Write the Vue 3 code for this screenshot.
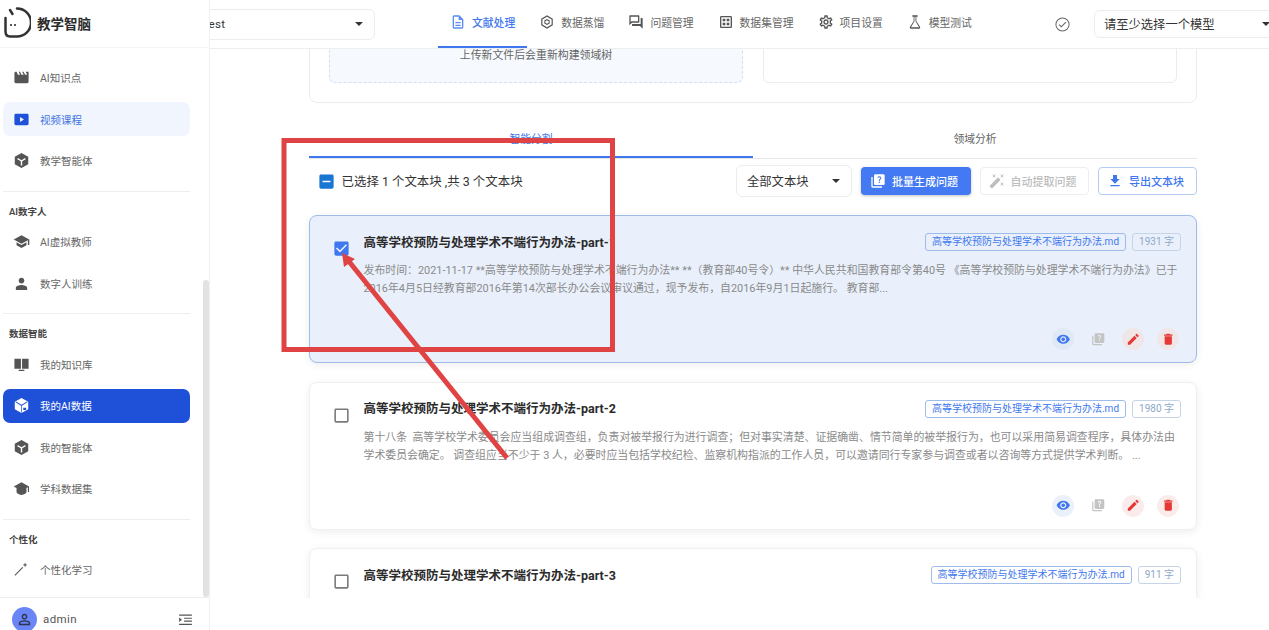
<script setup>
const icons = {
  movie: 'M18 4l2 4h-3l-2-4h-2l2 4h-3l-2-4H8l2 4H7L5 4H4c-1.1 0-1.99.9-1.99 2L2 18c0 1.1.9 2 2 2h16c1.1 0 2-.9 2-2V4h-4z',
  video: 'M20 4H4c-1.1 0-2 .9-2 2v12c0 1.1.9 2 2 2h16c1.1 0 2-.9 2-2V6c0-1.1-.9-2-2-2zM10 15.5v-7l5.5 3.5-5.5 3.5z',
  hex: 'M12 1.5l9.5 5.2v10.6L12 22.5l-9.5-5.2V6.7z M7 8.5l5 3 5-3 1 1.6-5 3V19h-2v-5.9l-5-3z',
  school: 'M5 13.18v4L12 21l7-3.82v-4L12 17l-7-3.82zM12 3L1 9l11 6 9-4.91V17h2V9L12 3z',
  person: 'M12 12c2.21 0 4-1.79 4-4s-1.79-4-4-4-4 1.79-4 4 1.79 4 4 4zm0 2c-2.67 0-8 1.34-8 4v3h16v-3c0-2.66-5.33-4-8-4z',
  book: 'M2 4h9.2v14H2z M12.8 4H22v14h-9.2z M8 19.5h8V21H8z',
  cube: 'M12 1.5l9.5 5.2v10.6L12 22.5l-9.5-5.2V6.7z M12 11.1L4.2 6.4l-.6 1 7.9 4.9V22h1V12.3l7.9-4.9-.6-1z M14.5 15h4v3.5h-4z',
  cap: 'M12 3L1 9l4 2.2V17c0 1.5 3 4 7 4s7-2.500 7-4v-5.800l2-1.100V17h1.600V9z',
  wand: 'M3.200 20.800l-1.100-1.100L13.200 8.600l1.100 1.100z M17 2l.9 2.600 2.600.9-2.600.9L17 9l-.9-2.600-2.600-.9 2.600-.9z',
  doc: 'M8 16h8v2H8zm0-4h8v2H8zm6-10H6c-1.100 0-2 .9-2 2v16c0 1.100.89 2 1.990 2H18c1.100 0 2-.9 2-2V8l-6-6zm4 18H6V4h7v5h5v11z',
  ring: 'M12 2l8.700 5v10L12 22l-8.700-5V7z M12 4.100L5.100 8.100v7.800l6.900 4 6.900-4V8.100z M12 7.500l4 2.300v4.400l-4 2.300-4-2.300V9.800z M12 9.200l-2.500 1.500v2.600l2.500 1.500 2.500-1.500v-2.600z',
  chat: 'M15 4v7H5.170L4 12.170V4h11m1-2H3c-.55 0-1 .45-1 1v14l4-4h10c.55 0 1-.45 1-1V3c0-.55-.45-1-1-1zm5 4h-2v9H6v2c0 .55.45 1 1 1h11l4 4V7c0-.55-.45-1-1-1z',
  grid: 'M19 3H5c-1.100 0-2 .9-2 2v14c0 1.100.9 2 2 2h14c1.100 0 2-.9 2-2V5c0-1.100-.9-2-2-2zm0 16H5V5h14v14zM7 7h4v4H7zm6 0h4v4h-4zm-6 6h4v4H7zm6 0h4v4h-4z',
  gear: 'M19.430 12.980c.04-.32.07-.64.07-.98 0-.34-.03-.66-.07-.98l2.110-1.650c.19-.15.24-.42.12-.64l-2-3.460c-.09-.16-.26-.25-.44-.25-.06 0-.12.01-.17.03l-2.490 1c-.52-.4-1.080-.73-1.690-.98l-.38-2.650C14.460 2.180 14.250 2 14 2h-4c-.25 0-.46.18-.49.42l-.38 2.650c-.61.25-1.170.59-1.690.98l-2.490-1c-.06-.02-.12-.03-.18-.03-.17 0-.34.09-.43.25l-2 3.460c-.13.22-.07.49.12.64l2.110 1.650c-.04.32-.07.65-.07.98 0 .33.03.66.07.98l-2.110 1.650c-.19.15-.24.42-.12.64l2 3.460c.09.16.26.25.44.25.06 0 .12-.01.17-.03l2.490-1c.52.4 1.080.73 1.690.98l.38 2.650c.03.24.24.42.49.42h4c.25 0 .46-.18.49-.42l.38-2.650c.61-.25 1.170-.59 1.690-.98l2.490 1c.06.02.12.03.18.03.17 0 .34-.09.43-.25l2-3.460c.12-.22.07-.49-.12-.64l-2.110-1.650zm-1.980-1.710c.04.31.05.52.05.73 0 .21-.02.43-.05.73l-.14 1.130.89.7 1.080.84-.7 1.210-1.270-.51-1.040-.42-.9.68c-.43.32-.84.56-1.250.73l-1.060.43-.16 1.130-.2 1.350h-1.400l-.19-1.350-.16-1.130-1.060-.43c-.43-.18-.83-.41-1.230-.71l-.91-.7-1.060.43-1.270.51-.7-1.210 1.080-.84.89-.7-.14-1.130c-.03-.31-.05-.54-.05-.74s.02-.43.05-.73l.14-1.130-.89-.7-1.080-.84.7-1.210 1.270.51 1.040.42.9-.68c.43-.32.84-.56 1.250-.73l1.060-.43.16-1.130.2-1.350h1.390l.19 1.350.16 1.130 1.060.43c.43.18.83.41 1.230.71l.91.7 1.060-.43 1.270-.51.7 1.210-1.070.85-.89.7.14 1.130zM12 8c-2.210 0-4 1.790-4 4s1.790 4 4 4 4-1.790 4-4-1.790-4-4-4zm0 6c-1.100 0-2-.9-2-2s.9-2 2-2 2 .9 2 2-.9 2-2 2z',
  flask: 'M8 2h8v2h-2v6.500l5.600 9c.6 1-.1 2.500-1.300 2.500H5.700c-1.200 0-1.900-1.500-1.300-2.500l5.600-9V4H8z M11.200 4h1.600v6.900L18 20H6l5.200-9.100z',
  check: 'M12 2a10 10 0 1 0 0 20 10 10 0 0 0 0-20zm0 1.400a8.600 8.600 0 1 1 0 17.200 8.600 8.600 0 0 1 0-17.200z M10.300 16.200L6.800 12.700l1.100-1.100 2.400 2.400 6-6 1.100 1.100z',
  quiz: 'M4 6H2v14c0 1.100.9 2 2 2h14v-2H4V6zm16-4H8c-1.100 0-2 .9-2 2v12c0 1.100.9 2 2 2h12c1.100 0 2-.9 2-2V4c0-1.100-.9-2-2-2zm-5.990 13c-.59 0-1.050-.47-1.050-1.050 0-.59.47-1.040 1.050-1.040.59 0 1.040.45 1.040 1.040-.01.58-.45 1.050-1.040 1.050zm2.500-6.170c-.63.93-1.230 1.210-1.560 1.810-.13.24-.18.4-.18 1.180h-1.520c0-.41-.06-1.080.26-1.650.41-.73 1.180-1.160 1.630-1.800.48-.68.21-1.940-1.140-1.940-.88 0-1.320.67-1.500 1.230l-1.370-.57C11.510 5.960 12.520 5 13.990 5c1.230 0 2.080.56 2.510 1.260.37.61.58 1.730.01 2.570z',
  magic: 'M7.500 5.600L10 7 8.600 4.500 10 2 7.500 3.400 5 2l1.400 2.500L5 7zm12 9.800L17 14l1.400 2.500L17 19l2.500-1.400L22 19l-1.400-2.500L22 14zM22 2l-2.500 1.400L17 2l1.400 2.500L17 7l2.500-1.400L22 7l-1.400-2.500zm-7.630 5.290a.996.996 0 0 0-1.410 0L1.290 18.960a.996.996 0 0 0 0 1.410l2.340 2.340c.39.39 1.020.39 1.410 0L16.700 11.050a.996.996 0 0 0 0-1.410l-2.330-2.350z',
  download: 'M19 9h-4V3H9v6H5l7 7 7-7zM5 18v2h14v-2H5z',
  eye: 'M12 4.500C7 4.500 2.730 7.610 1 12c1.730 4.390 6 7.500 11 7.500s9.270-3.110 11-7.500c-1.730-4.390-6-7.500-11-7.500zM12 17c-2.760 0-5-2.240-5-5s2.240-5 5-5 5 2.240 5 5-2.240 5-5 5zm0-8c-1.660 0-3 1.340-3 3s1.340 3 3 3 3-1.340 3-3-1.340-3-3-3z',
  edit: 'M3 17.250V21h3.750L17.810 9.940l-3.750-3.750L3 17.250zM20.710 7.040c.39-.39.39-1.020 0-1.410l-2.340-2.340c-.39-.39-1.020-.39-1.410 0l-1.830 1.830 3.750 3.750 1.830-1.830z',
  trash: 'M6 19c0 1.100.9 2 2 2h8c1.100 0 2-.9 2-2V7H6v12zM19 4h-3.500l-1-1h-5l-1 1H5v2h14V4z',
  boxOff: 'M19 5v14H5V5h14m0-2H5c-1.100 0-2 .9-2 2v14c0 1.100.9 2 2 2h14c1.100 0 2-.9 2-2V5c0-1.100-.9-2-2-2z',
  boxOn: 'M19 3H5c-1.110 0-2 .9-2 2v14c0 1.100.89 2 2 2h14c1.110 0 2-.9 2-2V5c0-1.100-.89-2-2-2zm-9 14l-5-5 1.410-1.410L10 14.170l7.590-7.590L19 8l-9 9z',
  boxSome: 'M19 3H5c-1.100 0-2 .9-2 2v14c0 1.100.9 2 2 2h14c1.100 0 2-.9 2-2V5c0-1.100-.9-2-2-2zm-2 10H7v-2h10v2z',
  avatar: 'M12 5.900a2.100 2.100 0 1 1 0 4.200 2.100 2.100 0 0 1 0-4.200m0 9c2.970 0 6.100 1.460 6.100 2.100v1.100H5.900V17c0-.64 3.130-2.100 6.100-2.100M12 4C9.790 4 8 5.790 8 8s1.790 4 4 4 4-1.790 4-4-1.790-4-4-4zm0 9c-2.670 0-8 1.340-8 4v3h16v-3c0-2.660-5.330-4-8-4z',
  collapse: 'M3 5h18v1.600H3z M10 9.500h11v1.600H10z M10 13.500h11v1.600H10z M3 18h18v1.600H3z M3 9l4 3.200-4 3.200z'
}

const navGroups = [
  {
    items: [
      { name: 'AI知识点', icon: 'movie' },
      { name: '视频课程', icon: 'video', state: 'soft' },
      { name: '教学智能体', icon: 'hex' }
    ]
  },
  {
    label: 'AI数字人',
    items: [
      { name: 'AI虚拟教师', icon: 'school' },
      { name: '数字人训练', icon: 'person' }
    ]
  },
  {
    label: '数据智能',
    items: [
      { name: '我的知识库', icon: 'book' },
      { name: '我的AI数据', icon: 'cube', state: 'solid' },
      { name: '我的智能体', icon: 'hex' },
      { name: '学科数据集', icon: 'cap' }
    ]
  },
  {
    label: '个性化',
    items: [{ name: '个性化学习', icon: 'wand' }]
  }
]

const tabs = [
  { name: '文献处理', icon: 'doc', active: true },
  { name: '数据蒸馏', icon: 'ring' },
  { name: '问题管理', icon: 'chat' },
  { name: '数据集管理', icon: 'grid' },
  { name: '项目设置', icon: 'gear' },
  { name: '模型测试', icon: 'flask' }
]

const chunks = [
  {
    title: '高等学校预防与处理学术不端行为办法-part-1',
    count: '1931 字',
    selected: true,
    text: '发布时间：2021-11-17 **高等学校预防与处理学术不端行为办法** **（教育部40号令）** 中华人民共和国教育部令第40号 《高等学校预防与处理学术不端行为办法》已于2016年4月5日经教育部2016年第14次部长办公会议审议通过，现予发布，自2016年9月1日起施行。 教育部...'
  },
  {
    title: '高等学校预防与处理学术不端行为办法-part-2',
    count: '1980 字',
    text: '第十八条  高等学校学术委员会应当组成调查组，负责对被举报行为进行调查；但对事实清楚、证据确凿、情节简单的被举报行为，也可以采用简易调查程序，具体办法由学术委员会确定。 调查组应当不少于 3 人，必要时应当包括学校纪检、监察机构指派的工作人员，可以邀请同行专家参与调查或者以咨询等方式提供学术判断。 ...'
  },
  {
    title: '高等学校预防与处理学术不端行为办法-part-3',
    count: '911 字',
    text: ''
  }
]

const actions = [
  { icon: 'eye', kind: 'view' },
  { icon: 'quiz', kind: 'off' },
  { icon: 'edit', kind: 'danger' },
  { icon: 'trash', kind: 'danger' }
]
</script>

<template>
  <div class="page">
    <aside class="sidebar">
      <div class="brand">
        <svg class="brand-logo" viewBox="0 0 28 38" fill="none" stroke="#333" stroke-width="2.500" stroke-linecap="round">
          <path d="M14 5.500a14 14 0 0 1 0 28H7c-3 0-4.500-2-4.500-5V15" />
          <path d="M7 7l2.500 4" />
          <circle cx="8" cy="22" r=".5" stroke-width="1.200" />
          <circle cx="12" cy="22" r=".5" stroke-width="1.200" />
        </svg>
        <span>教学智脑</span>
      </div>
      <div class="side-body">
        <nav class="nav">
          <div v-for="(group, i) in navGroups" :key="i" class="nav-group">
            <div v-if="group.label" class="nav-label">{{ group.label }}</div>
            <a v-for="item in group.items" :key="item.name" class="nav-item" :class="item.state">
              <svg viewBox="0 0 24 24"><path fill-rule="evenodd" :d="icons[item.icon]" /></svg>
              <span>{{ item.name }}</span>
            </a>
          </div>
        </nav>
        <div class="side-scroll"><div class="side-thumb"></div></div>
      </div>
      <div class="side-foot">
        <span class="avatar"><svg viewBox="0 0 24 24"><path fill-rule="evenodd" :d="icons.avatar" /></svg></span>
        <span class="user">admin</span>
        <svg class="collapse" viewBox="0 0 24 24"><path fill-rule="evenodd" :d="icons.collapse" /></svg>
      </div>
    </aside>

    <div class="main">
      <header class="topbar">
        <div class="select project">
          <span>test</span>
          <i class="caret"></i>
        </div>
        <div class="top-tabs">
          <a v-for="tab in tabs" :key="tab.name" class="top-tab" :class="{ active: tab.active }">
            <svg viewBox="0 0 24 24"><path fill-rule="evenodd" :d="icons[tab.icon]" /></svg>
            <span>{{ tab.name }}</span>
          </a>
        </div>
        <svg class="model-check" viewBox="0 0 24 24"><path fill-rule="evenodd" :d="icons.check" /></svg>
        <div class="select model">
          <span>请至少选择一个模型</span>
          <i class="caret"></i>
        </div>
      </header>

      <main class="content">
        <section class="upload-card">
          <div class="dropzone">上传新文件后会重新构建领域树</div>
          <div class="tree-box"></div>
        </section>

        <div class="split-tabs">
          <div class="split-tab active">智能分割</div>
          <div class="split-tab">领域分析</div>
        </div>

        <div class="toolbar">
          <svg class="box some" viewBox="0 0 24 24"><path :d="icons.boxSome" /></svg>
          <span class="sel-text">已选择 1 个文本块 ,共 3 个文本块</span>
          <div class="select filter">
            <span>全部文本块</span>
            <i class="caret"></i>
          </div>
          <button class="btn primary">
            <svg viewBox="0 0 24 24"><path :d="icons.quiz" /></svg>批量生成问题
          </button>
          <button class="btn disabled">
            <svg viewBox="0 0 24 24"><path :d="icons.magic" /></svg>自动提取问题
          </button>
          <button class="btn outline">
            <svg viewBox="0 0 24 24"><path :d="icons.download" /></svg>导出文本块
          </button>
        </div>

        <article v-for="chunk in chunks" :key="chunk.title" class="chunk" :class="{ selected: chunk.selected }">
          <svg class="box" :class="{ on: chunk.selected }" viewBox="0 0 24 24">
            <path :d="chunk.selected ? icons.boxOn : icons.boxOff" />
          </svg>
          <div class="chunk-main">
            <div class="chunk-head">
              <h3>{{ chunk.title }}</h3>
              <span class="chip file">高等学校预防与处理学术不端行为办法.md</span>
              <span class="chip count">{{ chunk.count }}</span>
            </div>
            <p>{{ chunk.text }}</p>
            <div class="chunk-actions">
              <span v-for="a in actions" :key="a.icon" class="act" :class="a.kind">
                <svg viewBox="0 0 24 24"><path :d="icons[a.icon]" /></svg>
              </span>
            </div>
          </div>
        </article>
      </main>
    </div>

    <!-- red annotation drawn on top of the screenshot -->
    <svg class="annotation" viewBox="0 0 1269 630">
      <rect x="284" y="140.500" width="328.500" height="209" fill="none" stroke="#e04343" stroke-width="5" />
      <path d="M507 458L347 259" fill="none" stroke="#e04343" stroke-width="5" />
      <path d="M342 253L355 259L344 267z" fill="#e04343" />
    </svg>
  </div>
</template>

<style>
html,
body {
  margin: 0;
  background: #fff;
  overflow: hidden;
}
</style>

<style scoped>
.page {
  position: relative;
  display: flex;
  width: 1269px;
  height: 630px;
  overflow: hidden;
  background: #fff;
  font-family: Roboto, "Noto Sans CJK SC", sans-serif;
  color: #333;
}

/* sidebar */
.sidebar {
  position: relative;
  z-index: 2;
  flex: 0 0 209px;
  display: flex;
  flex-direction: column;
  background: #fff;
  box-sizing: border-box;
  border-right: 1px solid #f0f0f0;
}

.brand {
  height: 48px;
  flex: none;
  display: flex;
  align-items: center;
  gap: 6px;
  padding-left: 3px;
  box-sizing: border-box;
  border-bottom: 1px solid #f4f4f4;
  font-size: 13.500px;
  font-weight: 700;
  color: #2c2c2c;
}

.brand span {
  margin-top: -2px;
}

.brand-logo {
  width: 28px;
  height: 38px;
  margin-top: -4px;
}

.side-body {
  flex: 1;
  display: flex;
  min-height: 0;
}

.nav {
  width: 187px;
  padding: 12.500px 0 0 3px;
  margin-right: 13px;
}

.nav-group {
  display: flex;
  flex-direction: column;
  gap: 7.500px;
  padding-bottom: 13px;
  margin-bottom: 13px;
  border-bottom: 1px solid #eee;
}

.nav-group:last-child {
  border-bottom: 0;
}

.nav-label {
  height: 14px;
  line-height: 14px;
  margin-bottom: -1.500px;
  padding-left: 6px;
  font-size: 9.500px;
  font-weight: 600;
  color: #444;
}

.nav-item {
  height: 34px;
  display: flex;
  align-items: center;
  gap: 10px;
  padding-left: 10px;
  border-radius: 7px;
  font-size: 10.500px;
  color: #666;
}

.nav-item svg {
  width: 17px;
  height: 17px;
  fill: #555;
  flex: none;
}

.nav-item.soft {
  background: #f1f6fe;
  color: #3f74e0;
}

.nav-item.soft svg {
  fill: #1e50d8;
}

.nav-item.solid {
  background: #1e50d8;
  color: #fff;
}

.nav-item.solid svg {
  fill: #fff;
}

.side-scroll {
  flex: none;
  width: 6px;
  padding-top: 232px;
}

.side-thumb {
  height: 317px;
  background: #e2e2e2;
  border-radius: 3px;
}

.side-foot {
  height: 33px;
  flex: none;
  display: flex;
  align-items: flex-start;
  padding: 9px 15px 0 12px;
  box-sizing: border-box;
  border-top: 1px solid #eee;
  overflow: hidden;
}

.avatar {
  width: 25px;
  height: 25px;
  flex: none;
  display: flex;
  align-items: center;
  justify-content: center;
  border-radius: 50%;
  background: #6a85f5;
}

.avatar svg {
  width: 17px;
  height: 17px;
  fill: #2b3550;
}

.user {
  margin-left: 6px;
  font-size: 11.500px;
  line-height: 24px;
  letter-spacing: .4px;
  color: #555;
}

.collapse {
  width: 17px;
  height: 17px;
  margin: 4px 0 0 auto;
  fill: #555;
}

/* header */
.main {
  flex: 1;
  min-width: 0;
  display: flex;
  flex-direction: column;
}

.topbar {
  height: 49px;
  flex: none;
  display: flex;
  align-items: center;
  box-sizing: border-box;
  border-bottom: 1px solid #eee;
}

.select {
  display: flex;
  align-items: center;
  justify-content: space-between;
  box-sizing: border-box;
  flex: none;
  background: #fff;
  border: 1px solid #ececec;
  border-radius: 6px;
  color: #333;
  white-space: nowrap;
}

.caret {
  width: 0;
  height: 0;
  border-left: 4px solid transparent;
  border-right: 4px solid transparent;
  border-top: 4px solid #333;
}

.project {
  width: 186px;
  height: 31px;
  margin-left: -21px;
  padding: 0 11px 0 14.500px;
  font-size: 11.500px;
  letter-spacing: .3px;
}

.top-tabs {
  display: flex;
  flex: none;
  height: 100%;
  margin-left: 63px;
}

.top-tab {
  box-sizing: border-box;
  display: flex;
  flex: none;
  align-items: center;
  gap: 6px;
  height: 100%;
  padding: 0 12px 3px 12px;
  font-size: 10.800px;
  white-space: nowrap;
  color: #666;
  border-bottom: 2px solid transparent;
}

.top-tab svg {
  width: 16px;
  height: 16px;
  fill: #555;
  flex: none;
}

.top-tab.active {
  color: #3f78ee;
  font-weight: 500;
  border-bottom-color: #3f78ee;
}

.top-tab.active svg {
  fill: #5b8df2;
}

.model-check {
  width: 17px;
  height: 17px;
  fill: #666;
  margin: 0 23px 0 70px;
  flex: none;
}

.model {
  width: 189px;
  height: 28px;
  padding: 0 12px 1px 9px;
  font-size: 12.300px;
}

/* content */
.content {
  height: 549px;
  flex: none;
  overflow: hidden;
  padding: 0 72px 0 99px;
}

.upload-card {
  display: flex;
  gap: 20px;
  height: 84px;
  margin-top: -30px;
  padding: 0 19px 19px;
  box-sizing: border-box;
  border: 1px solid #ececec;
  border-radius: 8px;
}

.dropzone {
  flex: 1;
  box-sizing: border-box;
  text-align: center;
  padding-top: 27px;
  line-height: 16px;
  font-size: 10.900px;
  color: #666;
  background: #f6fafe;
  border: 1px dashed #cfe0f3;
  border-radius: 6px;
}

.tree-box {
  flex: 1;
  border: 1px solid #ececec;
  border-radius: 6px;
}

.split-tabs {
  display: flex;
  height: 36px;
  margin-top: 19px;
  border-bottom: 1px solid #e6e6e6;
}

.split-tab {
  flex: 1;
  text-align: center;
  line-height: 36px;
  font-size: 10.800px;
  color: #666;
}

.split-tab.active {
  color: #3f78ee;
  height: 36px;
  box-sizing: border-box;
  border-bottom: 2px solid #3f78ee;
}

.toolbar {
  display: flex;
  align-items: center;
  height: 32px;
  margin: 6px 0 18px;
}

.box {
  width: 19px;
  height: 19px;
  fill: #7a7a7a;
  flex: none;
}

.box.some {
  margin-left: 7.500px;
  fill: #1976d2;
}

.box.on {
  fill: #3f78ee;
}

.sel-text {
  margin-left: 6px;
  font-size: 12.450px;
  color: #333;
}

.filter {
  width: 116px;
  height: 32px;
  margin-left: auto;
  margin-right: 9px;
  padding: 0 11px 0 10px;
  font-size: 12.300px;
}

.btn {
  box-sizing: border-box;
  display: flex;
  align-items: center;
  justify-content: center;
  gap: 6px;
  height: 28px;
  padding: 0 4px 0 0;
  font-family: inherit;
  font-size: 11px;
  font-weight: 500;
  border-radius: 4px;
  border: 1px solid transparent;
  background: #fff;
}

.btn svg {
  width: 16px;
  height: 16px;
}

.primary {
  width: 110px;
  margin-right: 9px;
  background: #4379f2;
  color: #fff;
  box-shadow: 0 1px 3px rgba(0, 0, 0, .25);
}

.primary svg {
  fill: #fff;
}

.disabled {
  width: 109px;
  margin-right: 9px;
  color: #bdbdbd;
  border-color: #eee;
}

.disabled svg {
  fill: #bdbdbd;
}

.outline {
  width: 99px;
  color: #3f78ee;
  border-color: #b4cbf2;
}

.outline svg {
  fill: #3f78ee;
}

.chunk {
  display: flex;
  align-items: flex-start;
  height: 148px;
  margin-bottom: 18.500px;
  padding: 17px 15px 12px 22px;
  box-sizing: border-box;
  background: #fff;
  border: 1px solid #f0f0f0;
  border-radius: 8px;
  box-shadow: 0 2px 8px rgba(0, 0, 0, .07);
}

.chunk.selected {
  background: #e9f0fb;
  border-color: #9dbce9;
}

.chunk .box {
  margin-top: 6px;
}

.chunk-main {
  flex: 1;
  min-width: 0;
  height: 100%;
  margin-left: 12.500px;
  display: flex;
  flex-direction: column;
}

.chunk-head {
  display: flex;
  align-items: center;
  height: 18px;
}

.chunk-head h3 {
  margin: 0 auto 2px 0;
  font-size: 12.500px;
  font-weight: 700;
  color: #2b2b2b;
}

.chip {
  box-sizing: border-box;
  height: 18px;
  line-height: 16px;
  padding: 0 6px;
  font-size: 10px;
  border-radius: 3px;
  white-space: nowrap;
  border: 1px solid #9dbce9;
}

.file {
  color: #3f78ee;
}

.count {
  margin-left: 6px;
  color: #8fa8c8;
  border-color: #c6d4e8;
}

.chunk p {
  margin: 11px 0 0;
  font-size: 10.900px;
  line-height: 18px;
  color: #8a8a8a;
  white-space: pre-wrap;
}

.chunk-actions {
  margin-top: auto;
  display: flex;
  justify-content: flex-end;
  gap: 13px;
  padding-right: 2px;
}

.act {
  width: 22px;
  height: 22px;
  display: flex;
  align-items: center;
  justify-content: center;
  border-radius: 50%;
}

.act svg {
  width: 14.500px;
  height: 14.500px;
}

.view {
  background: #dfe9f6;
}

.view svg {
  fill: #3f78ee;
}

.off svg {
  fill: #c4c4c4;
}

.danger {
  background: #f0e6e8;
}

.danger svg {
  fill: #e53935;
}

.chunk:not(.selected) .view {
  background: #eaf1fb;
}

.chunk:not(.selected) .danger {
  background: #fbecec;
}

.annotation {
  position: absolute;
  inset: 0;
  z-index: 3;
  width: 1269px;
  height: 630px;
  pointer-events: none;
}
</style>
